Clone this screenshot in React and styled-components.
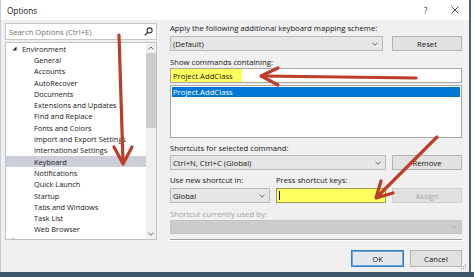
import React from 'react';
import styled, { createGlobalStyle } from 'styled-components';

const Global = createGlobalStyle`
  html, body { margin: 0; padding: 0; background: #ffffff; }
  body { font-family: "Open Sans", "Noto Sans", sans-serif; }
  * { box-sizing: border-box; }
`;

const Page = styled.div`
  position: relative;
  width: 474px;
  height: 277px;
  display: flex;
  flex-direction: column;
  overflow: hidden;
  background: #ffffff;
  font-size: 7.7px;
  color: #161616;
`;

const Window = styled.div`
  width: 471px;
  height: 272px;
  display: flex;
  flex-direction: column;
  border-left: 1px solid #b9d0e4;
  border-right: 2px solid #46627d;
`;

const Band = styled.div`
  height: 5px;
  background: #3c556c;
`;

const TitleBar = styled.div`
  height: 20px;
  display: flex;
  align-items: center;
  padding-left: 6px;
  background: #ffffff;
  font-size: 8.2px;
`;

const TitleText = styled.span`
  flex: 1;
`;

const TitleButton = styled.span`
  width: 29px;
  display: flex;
  justify-content: center;
  align-items: center;
  color: #333;
  font-size: 8.5px;
`;

const Body = styled.div`
  flex: 1;
  display: flex;
  gap: 13px;
  padding: 3px 0 0 4px;
  background: #f0f0f0;
`;

const LeftCol = styled.div`
  width: 152px;
  display: flex;
  flex-direction: column;
`;

const SearchBox = styled.div`
  height: 17px;
  display: flex;
  align-items: center;
  justify-content: space-between;
  padding: 0 3px 0 3px;
  background: #ffffff;
  border: 1px solid #c7c7c7;
  color: #707070;
`;

const TreeBox = styled.div`
  margin-top: 2px;
  height: 198px;
  display: flex;
  background: #ffffff;
  border: 1px solid #c2c2c2;
  font-size: 7.35px;
`;

const TreeList = styled.div`
  flex: 1;
  overflow: hidden;
`;

const TreeRow = styled.div`
  height: 11.3px;
  display: flex;
  align-items: center;
  padding-left: ${p => p.$indent}px;
  background: ${p => (p.$selected ? '#cccedb' : 'transparent')};
  white-space: nowrap;
`;

const Twisty = styled.span`
  width: 10px;
  display: inline-flex;
  align-items: center;
`;

const ScrollBar = styled.div`
  width: 10px;
  display: flex;
  flex-direction: column;
  background: #f0f0f0;
`;

const ScrollButton = styled.div`
  height: 10px;
  display: flex;
  align-items: center;
  justify-content: center;
`;

const ScrollTrack = styled.div`
  flex: 1;
`;

const ScrollThumb = styled.div`
  height: 75px;
  background: #cdcdcd;
`;

const RightCol = styled.div`
  width: 292px;
  display: flex;
  flex-direction: column;
`;

const Label = styled.div`
  height: ${p => p.$h || 10}px;
  margin-top: ${p => p.$mt || 0}px;
  line-height: ${p => p.$h || 10}px;
  color: ${p => (p.$disabled ? '#a2a2a2' : '#161616')};
  white-space: nowrap;
`;

const Row = styled.div`
  display: flex;
  gap: ${p => p.$gap}px;
  margin-top: ${p => p.$mt || 0}px;
  height: ${p => p.$h || 15}px;
`;

const GridRow = styled.div`
  display: grid;
  grid-template-columns: 100px 110px 1fr;
  column-gap: 6px;
  margin-top: ${p => p.$mt || 0}px;
  height: ${p => p.$h || 15}px;
  align-items: center;
`;

const Combo = styled.div`
  flex: 1;
  height: 100%;
  display: flex;
  align-items: center;
  justify-content: space-between;
  padding: 0 4px 0 2px;
  background: ${p => (p.$disabled ? '#cccccc' : '#e6e6e6')};
  border: 1px solid ${p => (p.$disabled ? '#c4c4c4' : '#b9b9b9')};
  color: #161616;
`;

const Button = styled.div`
  width: ${p => p.$w || 70}px;
  height: 100%;
  display: flex;
  align-items: center;
  justify-content: center;
  background: ${p => (p.$primary ? '#e4e8ed' : '#e1e1e1')};
  border: 1px solid ${p => (p.$primary ? '#2f7fc7' : p.$disabled ? '#cfcfcf' : '#b4b4b4')};
  box-shadow: ${p => (p.$primary ? 'inset 0 0 0 1px #6aa6db' : 'none')};
  color: ${p => (p.$disabled ? '#a8a8a8' : '#161616')};
`;

const TextInput = styled.div`
  margin-top: ${p => p.$mt || 0}px;
  height: 15px;
  display: flex;
  align-items: stretch;
  background: #ffffff;
  border: 1px solid #a8a8a8;
`;

const Highlight = styled.span`
  display: flex;
  align-items: center;
  padding: 0 9px 0 2px;
  background: #ffff5e;
`;

const List = styled.div`
  margin-top: 2px;
  height: 53px;
  padding: 1px;
  background: #ffffff;
  border: 1px solid #a8a8a8;
`;

const ListItem = styled.div`
  height: 10px;
  display: flex;
  align-items: center;
  padding-left: 1px;
  background: ${p => (p.$selected ? '#0078d7' : 'transparent')};
  color: ${p => (p.$selected ? '#ffffff' : '#161616')};
`;

const KeyInput = styled.div`
  height: 100%;
  display: flex;
  align-items: center;
  padding-left: 2px;
  background: #ffff5e;
  border: 1px solid #9c9c4a;
`;

const Caret = styled.span`
  width: 1px;
  height: 9px;
  background: #111;
`;

const Separator = styled.div`
  margin-top: 5px;
  height: 2px;
  border-top: 1px solid #a0a0a0;
  border-bottom: 1px solid #ffffff;
`;

const Footer = styled.div`
  display: flex;
  justify-content: flex-end;
  gap: 6px;
  margin-top: 9px;
  height: 17px;
`;

const Overlay = styled.svg`
  position: absolute;
  left: 0;
  top: 0;
  pointer-events: none;
`;

const Grip = styled.svg`
  position: absolute;
  right: 7px;
  bottom: 7px;
`;

const Chevron = ({ up, color = '#555' }) => (
  <svg width="6" height="4" viewBox="0 0 6 4">
    <polyline
      points={up ? '0.5,3.5 3,1 5.5,3.5' : '0.5,0.8 3,3.2 5.5,0.8'}
      fill="none"
      stroke={color}
      strokeWidth="0.9"
    />
  </svg>
);

const SearchIcon = () => (
  <svg width="9" height="9" viewBox="0 0 9 9">
    <circle cx="5.6" cy="3.4" r="2.5" fill="none" stroke="#333" strokeWidth="1.1" />
    <line x1="3.8" y1="5.2" x2="0.8" y2="8.2" stroke="#333" strokeWidth="1.3" />
  </svg>
);

const Expanded = () => (
  <svg width="5" height="5" viewBox="0 0 5 5">
    <polygon points="4.5,0.5 4.5,4.5 0.5,4.5" fill="#222" />
  </svg>
);

const Collapsed = () => (
  <svg width="5" height="6" viewBox="0 0 5 6">
    <polygon points="0.8,0.5 4,3 0.8,5.5" fill="none" stroke="#444" strokeWidth="0.8" />
  </svg>
);

const CloseIcon = () => (
  <svg width="8" height="8" viewBox="0 0 8 8">
    <path d="M0.5 0.5 L7.5 7.5 M7.5 0.5 L0.5 7.5" stroke="#333" strokeWidth="0.9" />
  </svg>
);

const children = [
  'General',
  'Accounts',
  'AutoRecover',
  'Documents',
  'Extensions and Updates',
  'Find and Replace',
  'Fonts and Colors',
  'Import and Export Settings',
  'International Settings',
  'Keyboard',
  'Notifications',
  'Quick Launch',
  'Startup',
  'Tabs and Windows',
  'Task List',
  'Web Browser',
];

const ARROW = '#bb3e29';

export default function App() {
  return (
    <Page>
      <Global />
      <Window>
        <TitleBar>
          <TitleText>Options</TitleText>
          <TitleButton>?</TitleButton>
          <TitleButton>
            <CloseIcon />
          </TitleButton>
        </TitleBar>
        <Body>
          <LeftCol>
            <SearchBox>
              <span>Search Options (Ctrl+E)</span>
              <SearchIcon />
            </SearchBox>
            <TreeBox>
              <TreeList>
                <TreeRow $indent={6}>
                  <Twisty>
                    <Expanded />
                  </Twisty>
                  Environment
                </TreeRow>
                {children.map(c => (
                  <TreeRow key={c} $indent={28} $selected={c === 'Keyboard'}>
                    {c}
                  </TreeRow>
                ))}
                <TreeRow $indent={6}>
                  <Twisty>
                    <Collapsed />
                  </Twisty>
                  Projects and Solutions
                </TreeRow>
              </TreeList>
              <ScrollBar>
                <ScrollButton>
                  <Chevron up />
                </ScrollButton>
                <ScrollTrack>
                  <ScrollThumb />
                </ScrollTrack>
                <ScrollButton>
                  <Chevron />
                </ScrollButton>
              </ScrollBar>
            </TreeBox>
          </LeftCol>
          <RightCol>
            <Label $h={11}>Apply the following additional keyboard mapping scheme:</Label>
            <Row $gap={9} $mt={2}>
              <Combo>
                <span>(Default)</span>
                <Chevron />
              </Combo>
              <Button>Reset</Button>
            </Row>
            <Label $mt={6}>Show commands containing:</Label>
            <TextInput $mt={1}>
              <Highlight>Project.AddClass</Highlight>
            </TextInput>
            <List>
              <ListItem $selected>Project.AddClass</ListItem>
            </List>
            <Label $mt={5}>Shortcuts for selected command:</Label>
            <Row $gap={6} $mt={2}>
              <Combo>
                <span>Ctrl+N, Ctrl+C (Global)</span>
                <Chevron />
              </Combo>
              <Button>Remove</Button>
            </Row>
            <GridRow $mt={5} $h={10}>
              <span>Use new shortcut in:</span>
              <span>Press shortcut keys:</span>
            </GridRow>
            <GridRow $mt={3}>
              <Combo>
                <span>Global</span>
                <Chevron />
              </Combo>
              <KeyInput>
                <Caret />
              </KeyInput>
              <Button $disabled>Assign</Button>
            </GridRow>
            <Label $mt={6} $disabled>
              Shortcut currently used by:
            </Label>
            <Row $mt={1} $h={14}>
              <Combo $disabled>
                <span />
                <Chevron color="#a8a8a8" />
              </Combo>
            </Row>
            <Separator />
            <Footer>
              <Button $primary $w={53}>
                OK
              </Button>
              <Button $w={52}>Cancel</Button>
            </Footer>
          </RightCol>
        </Body>
      </Window>
      <Band />
      <Grip width="6" height="6" viewBox="0 0 6 6">
        <rect x="4" y="0" width="1" height="1" fill="#a0a0a0" />
        <rect x="2" y="2" width="1" height="1" fill="#a0a0a0" />
        <rect x="4" y="2" width="1" height="1" fill="#a0a0a0" />
        <rect x="0" y="4" width="1" height="1" fill="#a0a0a0" />
        <rect x="2" y="4" width="1" height="1" fill="#a0a0a0" />
        <rect x="4" y="4" width="1" height="1" fill="#a0a0a0" />
      </Grip>
      <Overlay width="474" height="277" viewBox="0 0 474 277">
        <g stroke={ARROW} strokeWidth="3.2" fill="none" strokeLinecap="round" strokeLinejoin="round">
          <line x1="119" y1="35" x2="123" y2="162" />
          <polyline points="114,147 123,164 132,147" />
          <line x1="416" y1="78" x2="263" y2="76" />
          <polyline points="278,68 261,76 278,85" />
          <line x1="437" y1="137" x2="378" y2="196" />
          <polyline points="381,181 376,198 393,193" />
        </g>
      </Overlay>
    </Page>
  );
}
